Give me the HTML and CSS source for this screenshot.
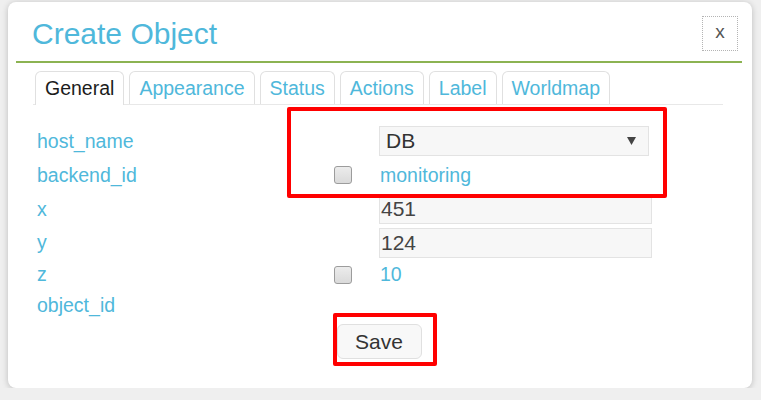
FILE: index.html
```html
<!DOCTYPE html>
<html>
<head>
<meta charset="utf-8">
<link rel="stylesheet" href="styles.css">
</head>
<body>
<div class="page">
  <div class="dialog">
    <div class="header">
      <h1 class="title">Create Object</h1>
      <button class="close" type="button">x</button>
    </div>
    <div class="tabs">
      <div class="tab active">General</div>
      <div class="tab">Appearance</div>
      <div class="tab">Status</div>
      <div class="tab">Actions</div>
      <div class="tab">Label</div>
      <div class="tab">Worldmap</div>
    </div>
    <div class="form">
      <div class="row r1">
        <div class="label">host_name</div>
        <div class="check"></div>
        <div class="value">
          <div class="select"><span>DB</span><svg class="arrow" width="9" height="8" viewBox="0 0 9 8"><path d="M0 0H9L4.5 8Z" fill="#444"/></svg></div>
        </div>
      </div>
      <div class="row r2">
        <div class="label">backend_id</div>
        <div class="check"><input type="checkbox" class="cb"></div>
        <div class="value text">monitoring</div>
      </div>
      <div class="row r3">
        <div class="label">x</div>
        <div class="check"></div>
        <div class="value"><input class="field" type="text" value="451"></div>
      </div>
      <div class="row r4">
        <div class="label">y</div>
        <div class="check"></div>
        <div class="value"><input class="field" type="text" value="124"></div>
      </div>
      <div class="row r5">
        <div class="label">z</div>
        <div class="check"><input type="checkbox" class="cb"></div>
        <div class="value text">10</div>
      </div>
      <div class="row r6">
        <div class="label">object_id</div>
        <div class="check"></div>
        <div class="value"></div>
      </div>
    </div>
    <div class="actions">
      <button class="save" type="button">Save</button>
    </div>
    <div class="mark mark-top"></div>
    <div class="mark mark-save"></div>
  </div>
</div>
</body>
</html>
```

FILE: styles.css
```css
html, body {
  margin: 0;
  padding: 0;
  background: #efefef;
  font-family: "Liberation Sans", Arial, sans-serif;
}

.page {
  padding: 2px 0 0 8px;
}

.dialog {
  position: relative;
  width: 744px;
  height: 386px;
  box-sizing: border-box;
  background: #fff;
  border-radius: 8px;
  box-shadow: 0 1px 6px rgba(0, 0, 0, 0.22);
  padding: 0 10px 0 8px;
}

.header {
  display: flex;
  justify-content: space-between;
  align-items: flex-start;
  height: 59px;
  border-bottom: 2px solid #8cb352;
}

.title {
  margin: 15px 0 0 16px;
  font-size: 30px;
  line-height: 34px;
  font-weight: normal;
  color: #4fb8db;
}

.close {
  margin: 14px 4px 0 0;
  width: 36px;
  height: 35px;
  box-sizing: border-box;
  border: 1px dotted #b4b4b4;
  background: #fff;
  font-family: "Liberation Sans", Arial, sans-serif;
  font-size: 19px;
  line-height: 28px;
  color: #555;
  padding: 0 0 4px 0;
}

.tabs {
  display: flex;
  gap: 5px;
  margin: 0 19px 0 17px;
  padding: 8px 0 0 2px;
  border-bottom: 1px solid #e8e8e8;
}

.tab {
  height: 32px;
  padding: 0 9px;
  border: 1px solid #e0e0e0;
  border-bottom: none;
  border-radius: 6px 6px 0 0;
  font-size: 19.5px;
  line-height: 32px;
  color: #4fb8db;
  background: #fff;
}

.tab.active {
  color: #1c1c1c;
  margin-bottom: -1px;
  height: 33px;
}

.form {
  padding: 19px 0 0 21px;
}

.row {
  display: grid;
  grid-template-columns: 297px 45px 273px;
  align-items: center;
}

.r1 { height: 34px; }
.r2 { height: 34px; }
.r3 { height: 34px; }
.r4 { height: 33px; }
.r5 { height: 31px; }
.r6 { height: 30px; }

.label {
  font-size: 19.5px;
  color: #4fb8db;
}

.check {
  display: flex;
  align-items: center;
}

.cb {
  appearance: none;
  -webkit-appearance: none;
  margin: 0;
  width: 18px;
  height: 18px;
  box-sizing: border-box;
  border: 1px solid #9c9c9c;
  border-radius: 3px;
  background: linear-gradient(#ececec, #dadada);
}

.value.text {
  font-size: 19.5px;
  color: #4fb8db;
  padding-left: 1px;
}

.select {
  display: flex;
  align-items: center;
  justify-content: space-between;
  width: 270px;
  height: 30px;
  box-sizing: border-box;
  border: 1px solid #e3e3e3;
  background: #f7f7f7;
  padding: 0 12px 0 6px;
  font-size: 21px;
  color: #333;
}

.arrow {
  display: block;
}

.field {
  display: block;
  width: 273px;
  height: 30px;
  box-sizing: border-box;
  margin: 0;
  border: 1px solid #e3e3e3;
  background: #f7f7f7;
  padding: 0 1px;
  font-family: "Liberation Sans", Arial, sans-serif;
  font-size: 21px;
  color: #444;
  outline: none;
}

.actions {
  display: flex;
  justify-content: center;
  padding-top: 4px;
}

.save {
  width: 85px;
  height: 35px;
  box-sizing: border-box;
  border: 1px solid #e0e0e0;
  border-radius: 6px;
  background: #f8f8f8;
  font-family: "Liberation Sans", Arial, sans-serif;
  font-size: 21px;
  color: #333;
  padding: 0;
}

.mark {
  position: absolute;
  box-sizing: border-box;
  border: 4px solid #ff0000;
  border-radius: 2px;
}

.mark-top {
  left: 279px;
  top: 105px;
  width: 380px;
  height: 91px;
}

.mark-save {
  left: 325px;
  top: 311px;
  width: 104px;
  height: 53px;
}
```
